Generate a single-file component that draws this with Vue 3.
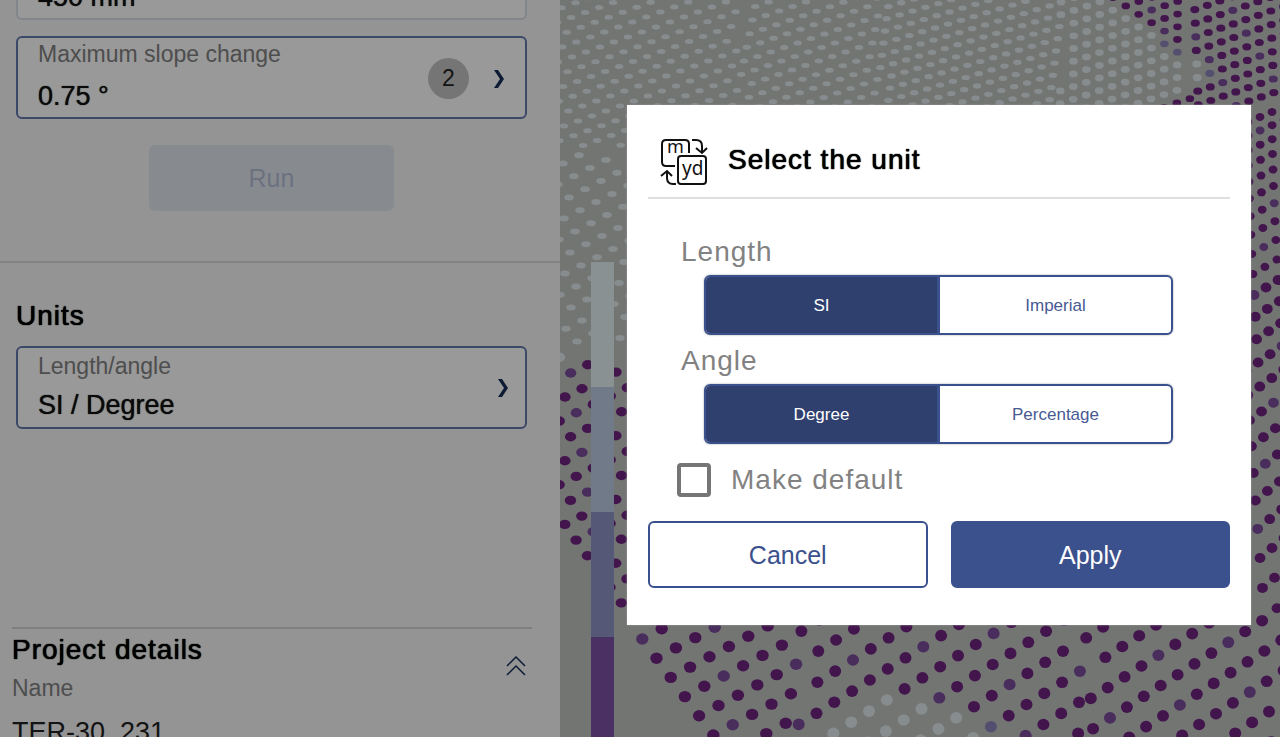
<script setup>
import { ref } from 'vue';

const unit = ref('si');
const angle = ref('degree');
const makeDefault = ref(false);

const groups = [
	{
		name: 'length',
		title: 'Length',
		model: unit,
		options: [
			{ value: 'si', text: 'SI' },
			{ value: 'imperial', text: 'Imperial' },
		],
	},
	{
		name: 'angle',
		title: 'Angle',
		model: angle,
		options: [
			{ value: 'degree', text: 'Degree' },
			{ value: 'percentage', text: 'Percentage' },
		],
	},
];

const legend = ['#e6f2f5', '#bccce4', '#8e94c6', '#7d52a5'];

// o = origin, u / v = lattice steps, box = [x1, y1, x2, y2]
const patches = [
	{ o: [566.7, 32.3], u: [14, -5], v: [9.6, 9.8], box: [560, 0, 740, 150], rx: 4.2, ry: 2.5 },
	{ o: [835, 43], u: [13.4, -4.5], v: [10.6, 9.1], box: [740, 0, 880, 110], rx: 4.2, ry: 2.5 },
	{ o: [936.7, 15.7], u: [12.9, -3.8], v: [11.3, 8.4], box: [880, 0, 1060, 110], rx: 4.2, ry: 2.6 },
	{ o: [1151.7, 10], u: [13, -4.3], v: [12.9, 8.4], box: [1060, 0, 1190, 110], rx: 4.3, ry: 3.4 },
	{ o: [1273.3, 79], u: [12.5, -4.3], v: [13, 9.3], box: [1190, 0, 1290, 106], rx: 4.5, ry: 3.6 },
	{ o: [580, 210.3], u: [16, -8.2], v: [11, 12.9], box: [560, 150, 640, 345], rx: 4.7, ry: 3 },
	{ o: [576.3, 412.7], u: [17, -8.3], v: [11.3, 15.7], box: [560, 345, 640, 630], rx: 5.7, ry: 4.7 },
	{ o: [642.3, 639], u: [19.4, -10.3], v: [14.2, 19.2], box: [630, 615, 800, 745], rx: 6.2, ry: 5.7 },
	{ o: [923.3, 646.7], u: [17.8, -11.1], v: [16.9, 20], box: [800, 615, 1080, 745], rx: 6, ry: 5.8 },
	{ o: [1228.3, 642.3], u: [16.9, -10.8], v: [19.2, 19.5], box: [1080, 615, 1290, 745], rx: 6, ry: 5.8 },
];

function dotColor(x, y, n) {
	// flat parts of the floor are pale, steep parts purple
	let d = 0;
	if (y < 110) {
		d = x < 1150 ? y - (x - 1098) * 0.66 : Math.min(y - (x - 1098) * 0.66, 105 - (x - 1150) * 0.5 - y);
		if (x < 1097) d = 20;
		if (y > 55 && x < 1197) d = 105 - (x - 1150) * 0.5 - y;
	} else if (x < 640) {
		d = 372 - (x - 560) * 0.4 - y;
	} else if (y > 690) {
		d = Math.min(y - 700 + (x - 884) * 0.56, y - 700 - (x - 900) * 0.4) + 6;
	} else {
		d = -20;
	}
	if (d > 0) return '#e2ebee';
	if (d > -7 && (y < 80 || y > 680)) return '#8d84ba';
	return n % 7 === 0 ? '#7b4c9c' : '#702481';
}

const dots = [];
function addDot(x, y, rx, ry, n) {
	if (y > 542 + (x - 560) * 1.28) return;
	const gap = rx * 2;
	const near = dots.some(dot => Math.hypot(dot.x - x, dot.y - y) < gap);
	if (near) return;
	dots.push({ x: x.toFixed(1), y: y.toFixed(1), rx, ry, fill: dotColor(x, y, n) });
}

patches.forEach(({ o, u, v, box, rx, ry }) => {
	for (let i = -40; i <= 40; i++) {
		for (let j = -40; j <= 40; j++) {
			const x = o[0] + u[0] * i + v[0] * j;
			const y = o[1] + u[1] * i + v[1] * j;
			if (x >= box[0] - 3 && x < box[2] && y >= box[1] - 4 && y < box[3]) {
				addDot(x, y, rx, ry, Math.abs(i * 3 + j * 5));
			}
		}
	}
});

// the columns at the right edge spread out towards the viewer
for (let j = -12; j <= 14; j++) {
	for (let i = -1; i <= 3; i++) {
		const x = 1254 + 1.2 * j + 0.06 * j * j + i * 12;
		const y = 295 + 21.3 * j + 0.4 * j * j - i * (7.5 + 0.25 * j);
		if (y > 106 && x > 1245) addDot(x, y, j < 0 ? 4.4 : 5.4, j < 0 ? 4 : 5, Math.abs(i * 3 + j * 5));
	}
}
</script>

<template>
	<div class="page">
		<aside class="sidebar">
			<div class="results">
				<button class="card card-muted" type="button">
					<span class="card-text">
						<span class="value">450 mm</span>
					</span>
					<span class="badge"></span>
					<svg class="chevron" viewBox="0 0 12 20"><path d="M1 1h4l6 9-6 9H1l6-9z" /></svg>
				</button>
				<button class="card" type="button">
					<span class="card-text">
						<span class="label">Maximum slope change</span>
						<span class="value">0.75 °</span>
					</span>
					<span class="badge">2</span>
					<svg class="chevron" viewBox="0 0 12 20"><path d="M1 1h4l6 9-6 9H1l6-9z" /></svg>
				</button>
				<button class="run" type="button" disabled>Run</button>
			</div>
			<section class="units">
				<h2>Units</h2>
				<button class="card" type="button">
					<span class="card-text">
						<span class="label">Length/angle</span>
						<span class="value">SI / Degree</span>
					</span>
					<svg class="chevron" viewBox="0 0 12 20"><path d="M1 1h4l6 9-6 9H1l6-9z" /></svg>
				</button>
			</section>
			<section class="project">
				<div class="project-head">
					<div>
						<h2>Project details</h2>
						<div class="label">Name</div>
					</div>
					<button class="collapse" type="button" aria-label="Collapse">
						<svg viewBox="0 0 40 40"><path d="M2 20L20 2l18 18M2 38l18-18 18 18" /></svg>
					</button>
				</div>
				<div class="project-name">TER-30_231</div>
			</section>
		</aside>

		<main class="map">
			<svg class="cloud" viewBox="560 0 720 737" preserveAspectRatio="xMidYMid slice">
				<ellipse v-for="(dot, index) in dots" :key="index" :cx="dot.x" :cy="dot.y" :rx="dot.rx" :ry="dot.ry" :fill="dot.fill" />
			</svg>
			<div class="legend">
				<div v-for="color in legend" :key="color" class="legend-step" :style="{ background: color }"></div>
			</div>
		</main>

		<div class="overlay">
			<form class="dialog" role="dialog" aria-labelledby="dialog-title" @submit.prevent>
				<header class="dialog-head">
					<svg class="unit-icon" viewBox="0 0 48 48">
						<path d="M29 15V6q0-4-4-4H6Q2 2 2 6v18q0 4 4 4h9" />
						<rect x="18" y="18" width="28" height="28" rx="3" />
						<path d="M32 2h4q6 0 6 6v6M36 10l6 5 5-5M16 46h-3q-6 0-6-6v-6M1 38l6-5 5 5" />
						<text x="7" y="15" font-size="18">m</text>
						<text x="22" y="37" font-size="19">yd</text>
					</svg>
					<h2 id="dialog-title">Select the unit</h2>
				</header>
				<fieldset v-for="group in groups" :key="group.name">
					<legend>{{ group.title }}</legend>
					<div class="toggle">
						<label v-for="option in group.options" :key="option.value" :class="{ active: group.model.value === option.value }">
							<input type="radio" :name="group.name" :value="option.value" v-model="group.model.value" />
							{{ option.text }}
						</label>
					</div>
				</fieldset>
				<label class="default">
					<input type="checkbox" v-model="makeDefault" />
					Make default
				</label>
				<div class="actions">
					<button class="cancel" type="button">Cancel</button>
					<button class="apply" type="submit">Apply</button>
				</div>
			</form>
		</div>
	</div>
</template>

<style>
body {
	margin: 0;
	overflow: hidden;
}
</style>

<style scoped>
.page {
	position: relative;
	display: flex;
	height: 100vh;
	overflow: hidden;
	font-family: "Liberation Sans", Arial, sans-serif;
	color: #000;
}
button {
	font-family: inherit;
	cursor: pointer;
}
h2 {
	margin: 0;
	font-size: 28px;
	line-height: 32px;
	font-weight: 400;
	letter-spacing: 1px;
	text-shadow: 0 0 1px #000, 0 0 1px #000;
}

.sidebar {
	flex: 0 0 560px;
	box-sizing: border-box;
	background: #f7f7f7;
	overflow: hidden;
}
.results {
	display: flex;
	flex-direction: column;
	gap: 16px;
	margin-top: -63px;
	padding: 0 33px 50px 16px;
	border-bottom: 2px solid #dadada;
}
.card {
	display: flex;
	align-items: center;
	box-sizing: border-box;
	width: 100%;
	height: 83px;
	padding: 0 20px;
	border: 2px solid #6379ad;
	border-radius: 6px;
	background: #fff;
	text-align: left;
}
.card-muted {
	border-color: #d9dfe8;
}
.card-text {
	display: flex;
	flex-direction: column;
	gap: 12px;
	flex: 1;
	padding-bottom: 3px;
}
.card-muted .card-text {
	padding-top: 40px;
}
.label {
	font-size: 23px;
	line-height: 28px;
	color: #828282;
}
.value {
	font-size: 27px;
	line-height: 32px;
	color: #111;
	text-shadow: 0 0 1px #111;
}
.badge {
	width: 41px;
	height: 41px;
	margin: 2px 24px 0 0;
	border-radius: 50%;
	background: #c4c4c4;
	font-size: 23px;
	line-height: 41px;
	text-align: center;
	color: #222;
}
.chevron {
	width: 12px;
	height: 20px;
	margin-top: 2px;
	fill: #173057;
}
.run {
	width: 245px;
	height: 66px;
	margin-top: 10px;
	align-self: center;
	border: 0;
	border-radius: 6px;
	background: #e2e8f0;
	color: #b5bcd6;
	font-size: 25px;
}
.units {
	padding: 37px 33px 0 16px;
}
.units .card {
	margin-top: 14px;
	padding-right: 16px;
}
.units .card-text {
	gap: 9px;
}
.units .chevron {
	margin-top: 0;
}
.project {
	margin: 198px 28px 0 12px;
	border-top: 2px solid #d4d4d4;
}
.project-head {
	display: flex;
	justify-content: space-between;
	align-items: flex-start;
	padding-top: 5px;
}
.project .label {
	margin-top: 8px;
}
.collapse {
	margin: 22px 6px 0 0;
	padding: 0;
	border: 0;
	background: none;
}
.collapse svg {
	display: block;
	width: 20px;
	height: 20px;
	fill: none;
	stroke: #173057;
	stroke-width: 3;
}
.project-name {
	margin-top: 14px;
	font-size: 27px;
	line-height: 32px;
	color: #222;
}

.map {
	position: relative;
	flex: 1;
	background: #c0c3c0;
}
.cloud {
	display: block;
	width: 100%;
	height: 100%;
}
.legend {
	position: absolute;
	left: 31px;
	top: 262px;
	bottom: 0;
	width: 23px;
	overflow: hidden;
}
.legend-step {
	height: 125px;
}

.overlay {
	position: absolute;
	inset: 0;
	display: flex;
	align-items: center;
	justify-content: flex-end;
	padding: 0 29px 7px 0;
	background: rgba(0, 0, 0, 0.4);
}
.dialog {
	box-sizing: border-box;
	width: 624px;
	padding: 33px 21px 37px;
	background: #fff;
	box-shadow: 0 0 2px #999;
}
.dialog-head {
	display: flex;
	align-items: center;
	gap: 20px;
	padding: 0 0 11px 12px;
	border-bottom: 2px solid #dfdfdf;
}
.unit-icon {
	width: 48px;
	height: 48px;
	fill: none;
	stroke: #111;
	stroke-width: 2;
}
.unit-icon text {
	fill: #111;
	stroke: none;
	font-family: "Noto Sans", sans-serif;
}
.dialog-head h2 {
	margin-bottom: 4px;
}
fieldset {
	margin: 0;
	padding: 0 57px 0 56px;
	border: 0;
}
fieldset legend,
.default {
	font-size: 28px;
	line-height: 34px;
	letter-spacing: 1px;
	color: #828282;
}
fieldset legend {
	margin-left: -23px;
	padding: 0;
}
.dialog-head + fieldset {
	margin-top: 36px;
}
fieldset + fieldset {
	margin-top: 9px;
}
.toggle {
	display: flex;
	box-sizing: border-box;
	height: 60px;
	margin-top: 6px;
	border: 2px solid #3b518d;
	border-radius: 6px;
	overflow: hidden;
	box-shadow: 0 0 2px #999;
}
.toggle label {
	display: flex;
	flex: 1;
	align-items: center;
	justify-content: center;
	padding-top: 2px;
	font-size: 17px;
	color: #475a93;
	cursor: pointer;
}
.toggle label:first-child {
	border-right: 3px solid #3b518d;
}
.toggle label.active {
	background: #2f406f;
	color: #fff;
}
.toggle input {
	position: absolute;
	opacity: 0;
}
.default {
	display: flex;
	align-items: center;
	gap: 20px;
	margin: 19px 0 0 29px;
}
.default input {
	appearance: none;
	width: 34px;
	height: 34px;
	margin: 0;
	border: 4px solid #757575;
	border-radius: 4px;
}
.actions {
	display: grid;
	grid-template-columns: 1fr 1fr;
	gap: 23px;
	margin-top: 24px;
}
.actions button {
	height: 67px;
	padding-top: 3px;
	border: 2px solid #3b518d;
	border-radius: 6px;
	font-size: 25px;
}
.cancel {
	background: #fff;
	color: #3b518d;
}
.apply {
	background: #3b518d;
	color: #fff;
}
</style>
